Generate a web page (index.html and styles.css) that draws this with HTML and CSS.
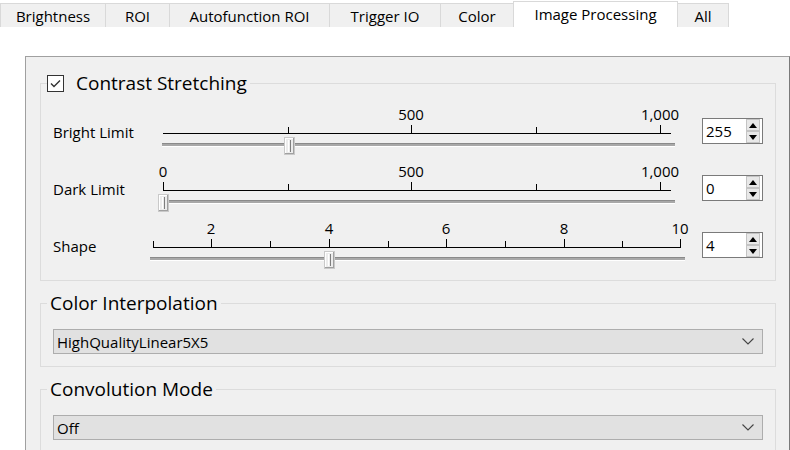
FILE: index.html
```html
<!DOCTYPE html>
<html>
<head>
<meta charset="utf-8">
<link rel="stylesheet" href="styles.css">
</head>
<body>
<div class="tabs">
  <div class="tab t-bright">Brightness</div>
  <div class="tab t-roi">ROI</div>
  <div class="tab t-afroi">Autofunction ROI</div>
  <div class="tab t-trig">Trigger IO</div>
  <div class="tab t-color">Color</div>
  <div class="tab t-img active">Image Processing</div>
  <div class="tab t-all">All</div>
</div>
<div class="pane">
  <div class="frame">
    <fieldset class="group group-cs">
      <legend class="legend legend-check">
        <span class="checkbox"><svg width="15" height="15" viewBox="0 0 15 15"><path d="M3 7.5 L6 10.5 L12 4.5" fill="none" stroke="#333" stroke-width="1.4"/></svg></span>Contrast Stretching
      </legend>

      <div class="srow">
        <div class="slabel">Bright Limit</div>
        <div class="slider">
          <svg class="scale" width="538" height="57">
            <line x1="13" y1="29.5" x2="521" y2="29.5" stroke="#000"/>
            <line x1="138.5" y1="23" x2="138.5" y2="29" stroke="#000"/>
            <line x1="261.5" y1="21" x2="261.5" y2="29" stroke="#000"/>
            <line x1="386.5" y1="23" x2="386.5" y2="29" stroke="#000"/>
            <line x1="510.5" y1="21" x2="510.5" y2="29" stroke="#000"/>
            <rect x="12" y="39" width="513" height="1" fill="#8a8a8a"/>
            <rect x="12" y="40" width="513" height="2" fill="#a8a8a8"/>
            <rect x="12" y="42" width="513" height="1" fill="#ffffff"/>
          </svg>
          <span class="tlabel" style="left:261px">500</span>
          <span class="tlabel" style="left:510px">1,000</span>
          <span class="thumb" style="left:134px"><svg width="11" height="18" viewBox="0 0 11 18"><rect x="0.5" y="0.5" width="10" height="17" fill="#ececec" stroke="#c9c9c9"/><path d="M1.5 1v16M1 1.5h9" stroke="#fff"/><path d="M4.5 3v12" stroke="#fff"/><path d="M6.5 3v12" stroke="#7e7e7e"/><path d="M9.5 1v16M1 16.5h9" stroke="#a0a0a0"/></svg></span>
        </div>
        <div class="spin"><span class="val">255</span><span class="btns"><span class="btn"><svg width="12" height="11" viewBox="0 0 12 11"><path d="M2 8 L6 3 L10 8 Z" fill="#000"/></svg></span><span class="btn"><svg width="12" height="11" viewBox="0 0 12 11"><path d="M2 3 L6 8 L10 3 Z" fill="#000"/></svg></span></span></div>
      </div>

      <div class="srow">
        <div class="slabel">Dark Limit</div>
        <div class="slider">
          <svg class="scale" width="538" height="57">
            <line x1="13" y1="29.5" x2="521" y2="29.5" stroke="#000"/>
            <line x1="13.5" y1="21" x2="13.5" y2="29" stroke="#000"/>
            <line x1="138.5" y1="23" x2="138.5" y2="29" stroke="#000"/>
            <line x1="261.5" y1="21" x2="261.5" y2="29" stroke="#000"/>
            <line x1="386.5" y1="23" x2="386.5" y2="29" stroke="#000"/>
            <line x1="510.5" y1="21" x2="510.5" y2="29" stroke="#000"/>
            <rect x="12" y="39" width="513" height="1" fill="#8a8a8a"/>
            <rect x="12" y="40" width="513" height="2" fill="#a8a8a8"/>
            <rect x="12" y="42" width="513" height="1" fill="#ffffff"/>
          </svg>
          <span class="tlabel" style="left:13px">0</span>
          <span class="tlabel" style="left:261px">500</span>
          <span class="tlabel" style="left:510px">1,000</span>
          <span class="thumb" style="left:8px"><svg width="11" height="18" viewBox="0 0 11 18"><rect x="0.5" y="0.5" width="10" height="17" fill="#ececec" stroke="#c9c9c9"/><path d="M1.5 1v16M1 1.5h9" stroke="#fff"/><path d="M4.5 3v12" stroke="#fff"/><path d="M6.5 3v12" stroke="#7e7e7e"/><path d="M9.5 1v16M1 16.5h9" stroke="#a0a0a0"/></svg></span>
        </div>
        <div class="spin"><span class="val">0</span><span class="btns"><span class="btn"><svg width="12" height="11" viewBox="0 0 12 11"><path d="M2 8 L6 3 L10 8 Z" fill="#000"/></svg></span><span class="btn"><svg width="12" height="11" viewBox="0 0 12 11"><path d="M2 3 L6 8 L10 3 Z" fill="#000"/></svg></span></span></div>
      </div>

      <div class="srow">
        <div class="slabel">Shape</div>
        <div class="slider">
          <svg class="scale" width="538" height="57">
            <line x1="3" y1="29.5" x2="531" y2="29.5" stroke="#000"/>
            <line x1="3.5" y1="23" x2="3.5" y2="29" stroke="#000"/>
            <line x1="61.5" y1="21" x2="61.5" y2="29" stroke="#000"/>
            <line x1="120.5" y1="23" x2="120.5" y2="29" stroke="#000"/>
            <line x1="179.5" y1="21" x2="179.5" y2="29" stroke="#000"/>
            <line x1="238.5" y1="23" x2="238.5" y2="29" stroke="#000"/>
            <line x1="296.5" y1="21" x2="296.5" y2="29" stroke="#000"/>
            <line x1="355.5" y1="23" x2="355.5" y2="29" stroke="#000"/>
            <line x1="414.5" y1="21" x2="414.5" y2="29" stroke="#000"/>
            <line x1="472.5" y1="23" x2="472.5" y2="29" stroke="#000"/>
            <line x1="530.5" y1="21" x2="530.5" y2="29" stroke="#000"/>
            <rect x="0" y="39" width="535" height="1" fill="#8a8a8a"/>
            <rect x="0" y="40" width="535" height="2" fill="#a8a8a8"/>
            <rect x="0" y="42" width="535" height="1" fill="#ffffff"/>
          </svg>
          <span class="tlabel" style="left:61px">2</span>
          <span class="tlabel" style="left:179px">4</span>
          <span class="tlabel" style="left:296px">6</span>
          <span class="tlabel" style="left:414px">8</span>
          <span class="tlabel" style="left:530px">10</span>
          <span class="thumb" style="left:174px"><svg width="11" height="18" viewBox="0 0 11 18"><rect x="0.5" y="0.5" width="10" height="17" fill="#ececec" stroke="#c9c9c9"/><path d="M1.5 1v16M1 1.5h9" stroke="#fff"/><path d="M4.5 3v12" stroke="#fff"/><path d="M6.5 3v12" stroke="#7e7e7e"/><path d="M9.5 1v16M1 16.5h9" stroke="#a0a0a0"/></svg></span>
        </div>
        <div class="spin"><span class="val">4</span><span class="btns"><span class="btn"><svg width="12" height="11" viewBox="0 0 12 11"><path d="M2 8 L6 3 L10 8 Z" fill="#000"/></svg></span><span class="btn"><svg width="12" height="11" viewBox="0 0 12 11"><path d="M2 3 L6 8 L10 3 Z" fill="#000"/></svg></span></span></div>
      </div>
    </fieldset>

    <fieldset class="group group-combo">
      <legend class="legend">Color Interpolation</legend>
      <div class="combo"><span>HighQualityLinear5X5</span><svg width="12" height="7" viewBox="0 0 12 7"><path d="M0.5 0.5 L6 6 L11.5 0.5" fill="none" stroke="#444" stroke-width="1.1"/></svg></div>
    </fieldset>

    <fieldset class="group group-combo">
      <legend class="legend">Convolution Mode</legend>
      <div class="combo"><span>Off</span><svg width="12" height="7" viewBox="0 0 12 7"><path d="M0.5 0.5 L6 6 L11.5 0.5" fill="none" stroke="#444" stroke-width="1.1"/></svg></div>
    </fieldset>
  </div>
</div>
</body>
</html>
```

FILE: styles.css
```css
html, body {
  margin: 0;
  padding: 0;
}
body {
  width: 790px;
  height: 450px;
  overflow: hidden;
  background: #ffffff;
  font-family: "Open Sans", "Noto Sans", sans-serif;
  font-size: 15px;
  color: #000;
}

/* Tabs */
.tabs {
  display: flex;
  align-items: flex-end;
  height: 27px;
}
.tab {
  box-sizing: border-box;
  height: 24px;
  margin-left: -1px;
  padding-top: 2px;
  border: 1px solid #d9d9d9;
  border-bottom: none;
  background: #f0f0f0;
  text-align: center;
  line-height: 20px;
  white-space: nowrap;
}
.tab.t-bright { margin-left: 0; width: 106px; }
.tab.t-roi { width: 65px; }
.tab.t-afroi { width: 161px; }
.tab.t-trig { width: 112px; }
.tab.t-color { width: 74px; }
.tab.t-img { width: 165px; }
.tab.t-all { width: 52px; }
.tab.active {
  height: 26px;
  background: #ffffff;
  position: relative;
  z-index: 1;
}

/* Pane */
.pane {
  padding: 29px 0 0 25px;
}
.frame {
  box-sizing: border-box;
  height: 394px;
  overflow: hidden;
  border: 1px solid #a0a0a0;
  border-right-color: #7a7a7a;
  border-bottom: none;
  background: #f0f0f0;
  padding: 0 13px 0 14px;
}

/* Group boxes */
.group {
  margin: 0;
  border: 1px solid #dcdcdc;
  padding: 0 12px;
  min-width: 0;
}
.group-cs {
  margin-top: 16px;
  padding-top: 11px;
  padding-bottom: 5px;
}
.group-combo {
  margin-top: 12px;
  padding-top: 16px;
  padding-bottom: 12px;
}
.legend {
  font-size: 19px;
  line-height: 20px;
  margin-left: -6px;
  padding: 0 3px;
  white-space: nowrap;
}
.legend-check {
  padding: 0 3px 0 0;
  display: flex;
  align-items: center;
}
.checkbox {
  box-sizing: border-box;
  width: 17px;
  height: 17px;
  border: 1px solid #333;
  background: #fff;
  margin-right: 12px;
  display: flex;
  align-items: center;
  justify-content: center;
}
.checkbox svg { display: block; }

/* Slider rows */
.srow {
  display: grid;
  grid-template-columns: 97px 1fr 61px;
  height: 57px;
}
.slabel {
  margin-top: 18px;
  line-height: 20px;
}
.slider {
  position: relative;
  margin-right: 13px;
  height: 57px;
}
.scale {
  display: block;
}
.tlabel {
  position: absolute;
  top: 2px;
  line-height: 16px;
  transform: translateX(-50%);
}
.thumb {
  position: absolute;
  top: 33px;
  width: 11px;
  height: 18px;
}
.thumb svg { display: block; }

/* Spin boxes */
.spin {
  box-sizing: border-box;
  margin-top: 14px;
  height: 26px;
  border: 1px solid #7a7a7a;
  background: #fff;
  display: flex;
  align-items: center;
}
.spin .val {
  flex: 1;
  padding-left: 3px;
  line-height: 20px;
}
.btns {
  display: flex;
  flex-direction: column;
  margin-right: 2px;
  align-self: center;
}
.btn {
  box-sizing: border-box;
  width: 14px;
  height: 12px;
  border: 1px solid #c4c4c4;
  background: #e8e8e8;
  display: flex;
  align-items: center;
  justify-content: center;
}
.btn svg { display: block; }

/* Combos */
.combo {
  box-sizing: border-box;
  height: 25px;
  border: 1px solid #adadad;
  background: #e1e1e1;
  display: flex;
  align-items: center;
  justify-content: space-between;
  padding: 0 8px 0 3px;
  line-height: 20px;
}
.combo svg { display: block; }
```
